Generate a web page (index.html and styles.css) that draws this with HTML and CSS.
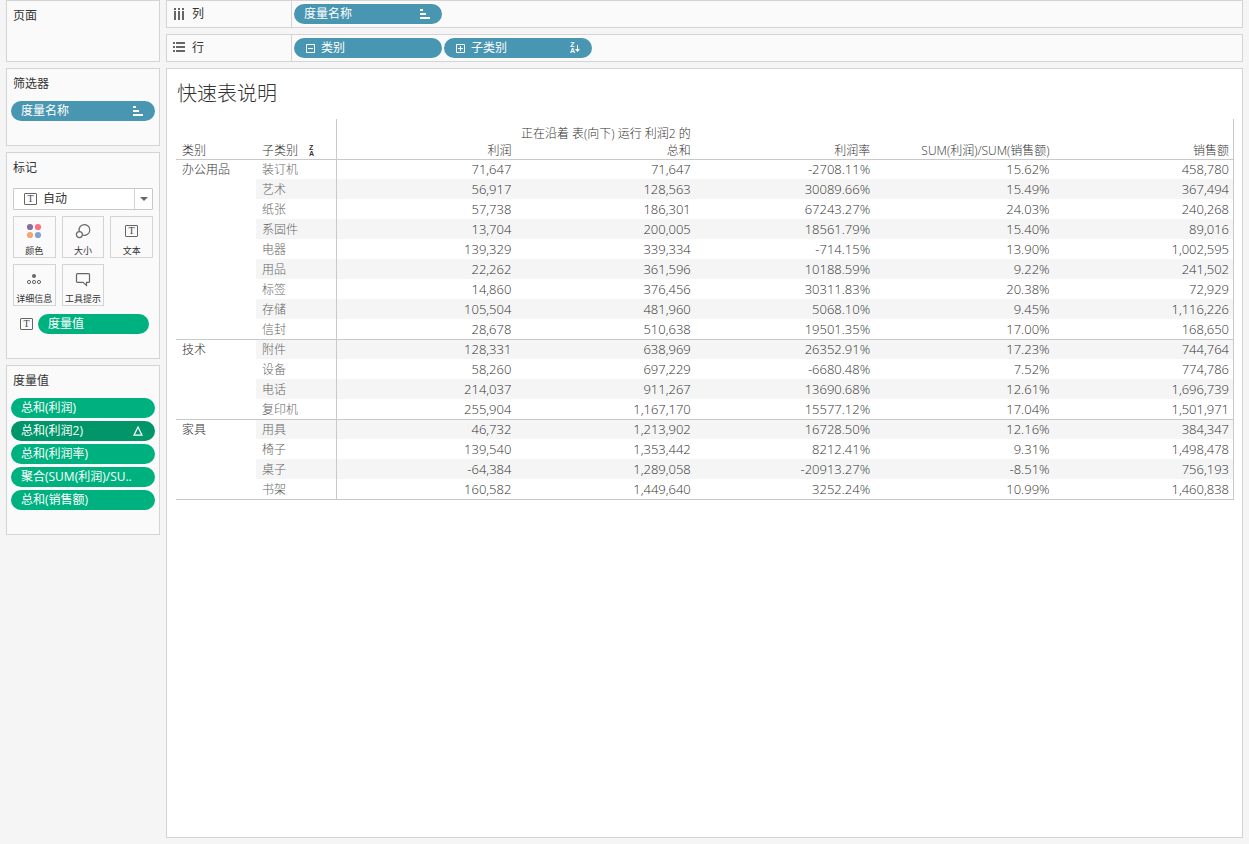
FILE: index.html
```html
<!DOCTYPE html>
<html lang="zh-CN">
  <head>
    <meta charset="UTF-8" />
    <meta name="viewport" content="width=device-width, initial-scale=1.0" />
    <title>快速表说明</title>
    <link rel="stylesheet" href="styles.css">
  </head>
  <body>
    <!-- shared icons -->
    <svg class="symbols" aria-hidden="true">
      <symbol id="icon-sort" viewBox="0 0 10 10">
        <path d="M0 0h3v2H0zM0 4h6v2H0zM0 8h10v2H0z" fill="currentColor" />
      </symbol>
    </svg>

    <div class="workbook">
      <aside class="sidebar">
        <section class="panel pages">
          <h2>页面</h2>
        </section>

        <section class="panel">
          <h2>筛选器</h2>
          <div class="pills">
            <button class="pill blue">度量名称<svg class="sort-icon"><use href="#icon-sort" /></svg></button>
          </div>
        </section>

        <section class="panel">
          <h2><label for="markType">标记</label></h2>
          <div class="mark-select">
            <span class="text-icon">T</span>
            <select id="markType">
              <option>自动</option>
            </select>
            <span class="arrow"></span>
          </div>
          <div class="mark-grid">
            <button class="mark">
              <svg width="16" height="16" viewBox="0 0 16 16">
                <circle cx="4" cy="4" r="3.1" fill="#876f9c" />
                <circle cx="12" cy="4" r="3.1" fill="#ff6f80" />
                <circle cx="4" cy="12" r="3.1" fill="#f5a676" />
                <circle cx="12" cy="12" r="3.1" fill="#82a3cf" />
              </svg>
              <span>颜色</span>
            </button>
            <button class="mark">
              <svg width="16" height="16" viewBox="0 0 16 16" fill="none" stroke="#666" stroke-width="1.2">
                <path d="M4.2 8.2A5.4 5.4 0 1 1 7.6 12" />
                <circle cx="4.4" cy="11.6" r="3" />
              </svg>
              <span>大小</span>
            </button>
            <button class="mark">
              <span class="text-icon">T</span>
              <span>文本</span>
            </button>
            <button class="mark">
              <svg width="16" height="16" viewBox="0 0 16 16" fill="none" stroke="#666">
                <circle cx="8" cy="5" r="2" fill="#666" stroke="none" />
                <circle cx="3" cy="11" r="1.6" />
                <circle cx="8" cy="11" r="1.6" />
                <circle cx="13" cy="11" r="1.6" />
              </svg>
              <span>详细信息</span>
            </button>
            <button class="mark">
              <svg width="16" height="16" viewBox="0 0 16 16" fill="none" stroke="#666" stroke-width="1.2">
                <path d="M2.5 2.6h11a1 1 0 0 1 1 1v6.8a1 1 0 0 1-1 1h-2v3L8 11.4H2.5a1 1 0 0 1-1-1V3.6a1 1 0 0 1 1-1z" />
              </svg>
              <span>工具提示</span>
            </button>
          </div>
          <div class="mark-pill">
            <span class="text-icon">T</span>
            <button class="pill green">度量值</button>
          </div>
        </section>

        <section class="panel">
          <h2>度量值</h2>
          <div class="pills">
            <button class="pill green">总和(利润)</button>
            <button class="pill green selected">总和(利润2)
              <svg width="10" height="10" viewBox="0 0 10 10" fill="none" stroke="#fff" stroke-width="1.2">
                <path d="M5 1L9 9.2H1z" />
              </svg>
            </button>
            <button class="pill green">总和(利润率)</button>
            <button class="pill green">聚合(SUM(利润)/SU..</button>
            <button class="pill green">总和(销售额)</button>
          </div>
        </section>
      </aside>

      <main class="main">
        <section class="shelf">
          <h2>
            <svg width="12" height="12" viewBox="0 0 12 12" fill="#666">
              <path d="M1 0h2v2H1zM5 0h2v2H5zM9 0h2v2H9zM1 3h2v9H1zM5 3h2v9H5zM9 3h2v9H9z" />
            </svg>
            列
          </h2>
          <div class="shelf-pills">
            <button class="pill blue">度量名称<svg class="sort-icon"><use href="#icon-sort" /></svg></button>
          </div>
        </section>

        <section class="shelf">
          <h2>
            <svg width="12" height="12" viewBox="0 0 12 12" fill="#666">
              <path d="M0 0h2v2H0zM0 4h2v2H0zM0 8h2v2H0zM3 0h9v2H3zM3 4h9v2H3zM3 8h9v2H3z" />
            </svg>
            行
          </h2>
          <div class="shelf-pills">
            <button class="pill blue">
              <span class="pill-name">
                <svg width="9" height="9" viewBox="0 0 9 9" fill="none" stroke="#fff">
                  <path d="M0.5 0.5h8v8h-8zM2 4.5h5" />
                </svg>
                类别
              </span>
            </button>
            <button class="pill blue">
              <span class="pill-name">
                <svg width="9" height="9" viewBox="0 0 9 9" fill="none" stroke="#fff">
                  <path d="M0.5 0.5h8v8h-8zM2 4.5h5M4.5 2v5" />
                </svg>
                子类别
              </span>
              <span class="sort-za">
                <span class="za"><b>Z</b><b>A</b></span>
                <svg width="5" height="7" viewBox="0 0 5 7" fill="#fff">
                  <path d="M2 0h1v4h2L2.5 7 0 4h2z" />
                </svg>
              </span>
            </button>
          </div>
        </section>

        <section class="view">
          <h1>快速表说明</h1>
          <table class="crosstab">
            <thead>
              <tr>
                <th class="category">类别</th>
                <th class="sub"><div class="sub-head">子类别 <span class="za"><b>Z</b><b>A</b></span></div></th>
                <th>利润</th>
                <th>正在沿着 表(向下) 运行 利润2 的总和</th>
                <th>利润率</th>
                <th>SUM(利润)/SUM(销售额)</th>
                <th>销售额</th>
              </tr>
            </thead>
            <tbody>
              <tr class="group"><th class="category" rowspan="9">办公用品</th><th class="sub">装订机</th><td>71,647</td><td>71,647</td><td>-2708.11%</td><td>15.62%</td><td>458,780</td></tr>
              <tr><th class="sub">艺术</th><td>56,917</td><td>128,563</td><td>30089.66%</td><td>15.49%</td><td>367,494</td></tr>
              <tr><th class="sub">纸张</th><td>57,738</td><td>186,301</td><td>67243.27%</td><td>24.03%</td><td>240,268</td></tr>
              <tr><th class="sub">系固件</th><td>13,704</td><td>200,005</td><td>18561.79%</td><td>15.40%</td><td>89,016</td></tr>
              <tr><th class="sub">电器</th><td>139,329</td><td>339,334</td><td>-714.15%</td><td>13.90%</td><td>1,002,595</td></tr>
              <tr><th class="sub">用品</th><td>22,262</td><td>361,596</td><td>10188.59%</td><td>9.22%</td><td>241,502</td></tr>
              <tr><th class="sub">标签</th><td>14,860</td><td>376,456</td><td>30311.83%</td><td>20.38%</td><td>72,929</td></tr>
              <tr><th class="sub">存储</th><td>105,504</td><td>481,960</td><td>5068.10%</td><td>9.45%</td><td>1,116,226</td></tr>
              <tr><th class="sub">信封</th><td>28,678</td><td>510,638</td><td>19501.35%</td><td>17.00%</td><td>168,650</td></tr>
              <tr class="group"><th class="category" rowspan="4">技术</th><th class="sub">附件</th><td>128,331</td><td>638,969</td><td>26352.91%</td><td>17.23%</td><td>744,764</td></tr>
              <tr><th class="sub">设备</th><td>58,260</td><td>697,229</td><td>-6680.48%</td><td>7.52%</td><td>774,786</td></tr>
              <tr><th class="sub">电话</th><td>214,037</td><td>911,267</td><td>13690.68%</td><td>12.61%</td><td>1,696,739</td></tr>
              <tr><th class="sub">复印机</th><td>255,904</td><td>1,167,170</td><td>15577.12%</td><td>17.04%</td><td>1,501,971</td></tr>
              <tr class="group"><th class="category" rowspan="4">家具</th><th class="sub">用具</th><td>46,732</td><td>1,213,902</td><td>16728.50%</td><td>12.16%</td><td>384,347</td></tr>
              <tr><th class="sub">椅子</th><td>139,540</td><td>1,353,442</td><td>8212.41%</td><td>9.31%</td><td>1,498,478</td></tr>
              <tr><th class="sub">桌子</th><td>-64,384</td><td>1,289,058</td><td>-20913.27%</td><td>-8.51%</td><td>756,193</td></tr>
              <tr><th class="sub">书架</th><td>160,582</td><td>1,449,640</td><td>3252.24%</td><td>10.99%</td><td>1,460,838</td></tr>
            </tbody>
          </table>
        </section>
      </main>
    </div>
  </body>
</html>
```
FILE: styles.css
```css
* {
  margin: 0;
  padding: 0;
  box-sizing: border-box;
}
body {
  font-family: "Open Sans", "Noto Sans CJK SC", sans-serif;
  font-size: 12px;
  line-height: 20px;
  background: #f5f5f5;
  color: #333;
}
button,
select {
  font: inherit;
  color: inherit;
  border: none;
  background: none;
  cursor: pointer;
}
h1,
h2,
th {
  font-weight: normal;
}
h2 {
  font-size: 12px;
}
svg {
  display: block;
  flex: none;
}
.symbols {
  position: absolute;
  width: 0;
  height: 0;
}

.workbook {
  display: flex;
  gap: 6px;
  min-height: 100vh;
  padding: 0 6px 6px;
}
.sidebar {
  flex: none;
  width: 154px;
  display: flex;
  flex-direction: column;
  gap: 6px;
}
.main {
  flex: 1;
  min-width: 0;
  display: flex;
  flex-direction: column;
  gap: 6px;
}

/* Sidebar panels */
.panel {
  background: #fafafa;
  border: 1px solid #d4d4d4;
  padding: 5px 6px 24px;
}
.pages {
  min-height: 62px;
}
.pills {
  display: flex;
  flex-direction: column;
  gap: 3px;
  margin: 7px -2px 0;
}
.pill {
  display: flex;
  align-items: center;
  justify-content: space-between;
  height: 20px;
  padding: 0 12px 0 10px;
  border-radius: 10px;
  color: #fff;
  line-height: 20px;
  white-space: nowrap;
}
.blue {
  background: #4996b2;
}
.green {
  background: #00b180;
}
.selected {
  background: #009669;
}
.sort-icon {
  width: 10px;
  height: 10px;
}
.text-icon {
  flex: none;
  width: 13px;
  height: 12px;
  border: 1px solid #666;
  border-radius: 1px;
  color: #444;
  font: 10px "Liberation Serif", serif;
  line-height: 10px;
  text-align: center;
}

/* Marks card */
.mark-select {
  display: flex;
  align-items: center;
  height: 22px;
  margin-top: 10px;
  padding-left: 10px;
  background: #fff;
  border: 1px solid #c8c8c8;
  border-radius: 1px;
}
.mark-select select {
  flex: 1;
  height: 20px;
  padding-left: 6px;
  appearance: none;
}
.arrow {
  display: flex;
  align-items: center;
  justify-content: center;
  width: 18px;
  height: 20px;
  border-left: 1px solid #d4d4d4;
  pointer-events: none;
}
.arrow::after {
  content: "";
  border: 4px solid transparent;
  border-top-color: #666;
  border-bottom: none;
}
.mark-grid {
  display: grid;
  grid-template-columns: repeat(3, 1fr);
  gap: 6px;
  margin-top: 6px;
}
.mark {
  display: flex;
  flex-direction: column;
  align-items: center;
  justify-content: space-between;
  height: 42px;
  padding-top: 6px;
  border: 1px solid #d4d4d4;
  font-size: 9px;
  line-height: 12px;
  white-space: nowrap;
}
.mark .text-icon {
  margin-top: 2px;
}
.mark-pill {
  display: flex;
  align-items: center;
  gap: 5px;
  margin-top: 8px;
  padding: 0 4px 0 7px;
}
.mark-pill .pill {
  flex: 1;
}

/* Shelves */
.shelf {
  display: flex;
  height: 28px;
  background: #fafafa;
  border: 1px solid #d4d4d4;
}
.shelf h2 {
  display: flex;
  align-items: center;
  gap: 7px;
  width: 125px;
  padding-left: 6px;
  border-right: 1px solid #d4d4d4;
}
.shelf-pills {
  display: flex;
  align-items: center;
  gap: 2px;
  padding-left: 2px;
}
.shelf-pills .pill {
  width: 148px;
}
.pill-name {
  display: flex;
  align-items: center;
  gap: 6px;
  padding-left: 2px;
}
.sort-za {
  display: flex;
  align-items: center;
}
.za {
  display: flex;
  flex-direction: column;
  font: bold 7px "Liberation Sans", sans-serif;
  line-height: 6px;
}

/* Worksheet */
.view {
  flex: 1;
  background: #fff;
  border: 1px solid #d4d4d4;
  padding: 10px 8px 10px 9px;
}
.view h1 {
  padding-left: 1px;
  font-size: 20px;
  line-height: 30px;
  font-weight: 300;
}
.crosstab {
  width: 100%;
  margin-top: 10px;
  table-layout: fixed;
  border-collapse: separate;
  border-spacing: 0;
  border-bottom: 1px solid #c9c9c9;
}
.crosstab th,
.crosstab td {
  height: 20px;
  padding: 0 5px 0 0;
  font-weight: 300;
  text-align: right;
}
.crosstab td {
  font-size: 13px;
  line-height: 19px;
}
.crosstab th {
  line-height: 19px;
}
.crosstab thead th {
  height: 40px;
  line-height: 17px;
  vertical-align: bottom;
}
.crosstab .category,
.crosstab .sub {
  width: 80px;
  padding: 0 0 0 6px;
  text-align: left;
}
.crosstab .category {
  vertical-align: top;
}
.crosstab thead .category {
  vertical-align: bottom;
}
.crosstab .sub {
  width: 81px;
  border-right: 1px solid #c9c9c9;
}
.crosstab tbody .sub {
  color: #666;
}
.crosstab th:last-child,
.crosstab td:last-child {
  border-right: 1px solid #c9c9c9;
  padding-right: 4px;
}
.crosstab .group th,
.crosstab .group td {
  border-top: 1px solid #c9c9c9;
}
.crosstab tbody tr:nth-child(even) td,
.crosstab tbody tr:nth-child(even) .sub {
  background: #f5f5f5;
}
.sub-head {
  display: flex;
  align-items: center;
  gap: 11px;
}
```
